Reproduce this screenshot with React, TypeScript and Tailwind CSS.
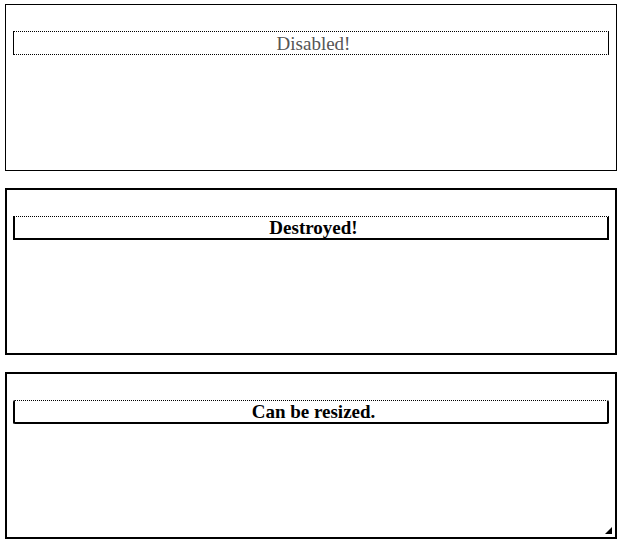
export default function App() {
  return (
    <div className="min-h-screen bg-white pt-[4px] pl-[5px] font-['Liberation_Serif',serif] text-black">
      <div className="flex w-[612px] flex-col gap-[17px]">
        {/* disabled */}
        <div className="h-[167px] border border-black bg-white pt-[26px] px-[7px]">
          <div className="flex h-[24px] items-center justify-center border border-black pl-[5px] [border-top-style:dotted] [border-bottom-style:dotted] text-[19px] leading-none text-[#555]">
            Disabled!
          </div>
        </div>

        {/* destroyed */}
        <div className="h-[167px] border-2 border-black bg-white pt-[26px] px-[6px]">
          <div className="flex h-[24px] items-center justify-center border-2 border-t border-black pl-[5px] [border-top-style:dotted] text-[19px] font-bold leading-none">
            Destroyed!
          </div>
        </div>

        {/* resizable */}
        <div className="relative h-[167px] border-2 border-black bg-white pt-[26px] px-[6px]">
          <div className="flex h-[24px] items-center justify-center rounded-[2px] border-2 border-t border-black pl-[5px] [border-top-style:dotted] text-[19px] font-bold leading-none">
            Can be resized.
          </div>
          <svg className="absolute bottom-[3px] right-[3px]" width="7" height="7" viewBox="0 0 7 7">
            <polygon points="7,0 7,7 0,7" fill="#000" />
          </svg>
        </div>
      </div>
    </div>
  );
}
